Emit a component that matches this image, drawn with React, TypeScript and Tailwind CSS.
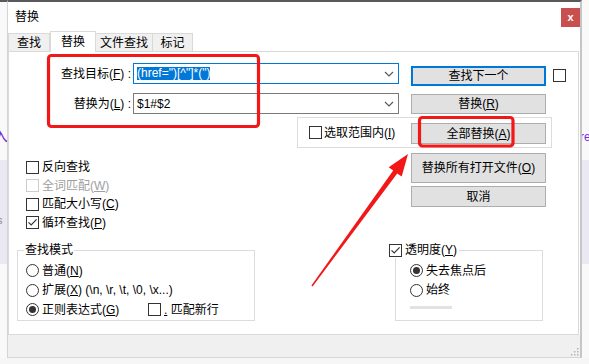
import React from "react";

const U = ({ children }: { children: React.ReactNode }) => (
  <span className="underline decoration-[1px] underline-offset-[1px]">{children}</span>
);

const Check = ({ checked = false, disabled = false }: { checked?: boolean; disabled?: boolean }) => (
  <span
    className={
      disabled
        ? "flex h-[13px] w-[13px] shrink-0 items-center justify-center border border-[#cccccc] bg-white"
        : "flex h-[13px] w-[13px] shrink-0 items-center justify-center border border-[#333333] bg-white"
    }
  >
    {checked && (
      <svg width="11" height="11" viewBox="0 0 11 11">
        <path d="M1.5 5.3 L4.2 8 L9.6 2.4" fill="none" stroke="#333333" strokeWidth="1.2" />
      </svg>
    )}
  </span>
);

const Radio = ({ checked = false }: { checked?: boolean }) => (
  <span className="flex h-[13px] w-[13px] shrink-0 items-center justify-center rounded-full border border-[#333333] bg-white">
    {checked && <span className="h-[7px] w-[7px] rounded-full bg-[#333333]" />}
  </span>
);

const Chevron = () => (
  <svg width="10" height="6" viewBox="0 0 10 6">
    <path d="M1 1 L5 5 L9 1" fill="none" stroke="#555555" strokeWidth="1.1" />
  </svg>
);

export default function App() {
  return (
    <div className="relative flex h-[364px] w-[589px] overflow-hidden bg-[#f6f6f6] font-[family-name:'Liberation_Sans','Noto_Sans_CJK_SC',sans-serif] text-[12px] leading-[16px] text-black">
      {/* left background strip */}
      <div className="flex h-[358px] w-[7px] shrink-0 flex-col overflow-hidden border-t-2 border-t-[#5a5a5a] bg-[#f9f9f9]">
        <div className="h-[124px] shrink-0" />
        <div className="-ml-[7px] h-[20px] shrink-0 text-[15px] leading-[20px] text-[#7a2bd6]">入</div>
        <div className="h-[14px] shrink-0" />
        <div className="flex h-[104px] shrink-0 flex-col bg-[#e9e8f3] pt-[54px]">
          <span className="-ml-[3px] text-[11px] leading-[12px] text-[#8a8a8a]">s</span>
        </div>
      </div>

      {/* dialog */}
      <div className="flex h-[358px] w-[575px] shrink-0 flex-col border-t-2 border-r-2 border-b border-l border-t-[#5a5a5a] border-r-[#c6c6c6] border-b-[#d6d6d6] border-l-[#d4d4d4] bg-white">
        {/* title bar */}
        <div className="flex h-[29px] shrink-0 justify-between">
          <span className="ml-[7px] self-center">替换</span>
          <div className="mt-[6px] flex h-[19px] w-[19px] items-center justify-center bg-[#c94f4f] text-[11px] font-bold leading-[11px] text-white">
            x
          </div>
        </div>

        {/* tabs */}
        <div className="flex h-[20px] shrink-0 items-end">
          <div className="flex h-[18px] w-[42px] items-center justify-center border border-b-0 border-[#d9d9d9] bg-[#f0f0f0]">查找</div>
          <div className="relative z-10 -mb-px flex h-[21px] w-[46px] items-center justify-center border border-b-0 border-[#d9d9d9] bg-white">替换</div>
          <div className="flex h-[18px] w-[57px] items-center justify-center border border-b-0 border-l-0 border-[#d9d9d9] bg-[#f0f0f0]">文件查找</div>
          <div className="flex h-[18px] w-[40px] items-center justify-center border border-b-0 border-l-0 border-[#d9d9d9] bg-[#f0f0f0]">标记</div>
        </div>

        {/* panel */}
        <div className="flex h-[284px] w-[571px] shrink-0 flex-col border border-[#d9d9d9] bg-white">
          {/* Row A */}
          <div className="mt-[11px] flex">
            <div className="flex flex-col gap-[9px]">
              <div className="flex h-[21px] items-center">
                <span className="w-[122px] text-right">
                  查找目标(<U>F</U>) :
                </span>
                <div className="ml-[2px] flex h-[21px] w-[266px] items-center justify-between border border-[#0078d7] bg-white pr-[4px] pl-[3px]">
                  <span className="bg-[#0078d7] leading-[13px] text-white">{'(href=")[^"]*(")'}</span>
                  <Chevron />
                </div>
              </div>
              <div className="flex h-[21px] items-center">
                <span className="w-[122px] text-right">
                  替换为(<U>L</U>) :
                </span>
                <div className="ml-[2px] flex h-[21px] w-[266px] items-center justify-between border border-[#7a7a7a] bg-white pr-[4px] pl-[3px]">
                  <span>$1#$2</span>
                  <Chevron />
                </div>
              </div>
            </div>
            <div className="mt-[3px] ml-[12px] flex flex-col gap-[8px]">
              <div className="flex h-[20px] w-[135px] items-center justify-center border-2 border-[#0078d7] bg-[#e1e1e1]">查找下一个</div>
              <div className="flex h-[20px] w-[135px] items-center justify-center border border-[#adadad] bg-[#e1e1e1]">
                替换(<U>R</U>)
              </div>
            </div>
            <div className="mt-[6px] ml-[7px]">
              <Check />
            </div>
          </div>

          {/* Row B */}
          <div className="mt-[3px] ml-[288px] flex h-[31px] w-[255px] items-center border border-[#dcdcdc]">
            <div className="flex w-[113px] items-center gap-[2px] pl-[11px]">
              <Check />
              <span>
                选取范围内(<U>I</U>)
              </span>
            </div>
            <div className="mt-[2px] flex h-[21px] w-[135px] items-center justify-center border border-[#adadad] bg-[#e1e1e1]">
              全部替换(<U>A</U>)
            </div>
          </div>

          {/* Row C */}
          <div className="flex">
            <div className="mt-[10px] flex w-[402px] flex-col pl-[17px]">
              <div className="flex h-[18.5px] items-center gap-[3px]">
                <Check />
                <span>反向查找</span>
              </div>
              <div className="flex h-[18.5px] items-center gap-[3px] text-[#a0a0a0]">
                <Check disabled />
                <span>
                  全词匹配(<U>W</U>)
                </span>
              </div>
              <div className="flex h-[18.5px] items-center gap-[3px]">
                <Check />
                <span>
                  匹配大小写(<U>C</U>)
                </span>
              </div>
              <div className="flex h-[18.5px] items-center gap-[3px]">
                <Check checked />
                <span>
                  循环查找(<U>P</U>)
                </span>
              </div>
            </div>
            <div className="mt-[5px] flex flex-col gap-[3px]">
              <div className="flex h-[30px] w-[135px] items-center justify-center border border-[#adadad] bg-[#e1e1e1]">
                替换所有打开文件(<U>O</U>)
              </div>
              <div className="flex h-[21px] w-[135px] items-center justify-center border border-[#adadad] bg-[#e1e1e1]">取消</div>
            </div>
          </div>

          {/* Row D */}
          <div className="mt-[10px] flex">
            <fieldset className="ml-[8px] h-[79px] w-[238px] border border-[#dcdcdc]">
              <legend className="ml-[6px] px-[1px]">查找模式</legend>
              <div className="flex flex-col pt-[3px] pl-[8px]">
                <div className="flex h-[19.5px] items-center gap-[3px]">
                  <Radio />
                  <span>
                    普通(<U>N</U>)
                  </span>
                </div>
                <div className="flex h-[19.5px] items-center gap-[3px]">
                  <Radio />
                  <span>
                    扩展(<U>X</U>) {"(\\n, \\r, \\t, \\0, \\x...)"}
                  </span>
                </div>
                <div className="flex h-[19.5px] items-center">
                  <div className="flex w-[122px] items-center gap-[3px]">
                    <Radio checked />
                    <span>
                      正则表达式(<U>G</U>)
                    </span>
                  </div>
                  <div className="flex items-center gap-[3px]">
                    <Check />
                    <span>
                      <U>.</U> 匹配新行
                    </span>
                  </div>
                </div>
              </div>
            </fieldset>
            <fieldset className="ml-[140px] h-[79px] w-[148px] border border-[#dcdcdc]">
              <legend className="-ml-[7px] flex items-center gap-[3px] bg-white pr-[2px]">
                <Check checked />
                <span>
                  透明度(<U>Y</U>)
                </span>
              </legend>
              <div className="flex flex-col pt-[3px] pl-[14px]">
                <div className="flex h-[19.5px] items-center gap-[3px]">
                  <Radio checked />
                  <span>失去焦点后</span>
                </div>
                <div className="flex h-[19.5px] items-center gap-[3px]">
                  <Radio />
                  <span>始终</span>
                </div>
                <div className="mt-[6px] h-[3px] w-[42px] bg-[#e2e2e2]" />
              </div>
            </fieldset>
          </div>
        </div>

        {/* bottom strip */}
        <div className="flex flex-1 items-end justify-end bg-[#f0f0f0] pr-[1px] pb-[1px]">
          <svg width="9" height="9" viewBox="0 0 9 9">
            <rect x="7" y="1" width="1.5" height="1.5" fill="#b5b5b5" />
            <rect x="4" y="4" width="1.5" height="1.5" fill="#b5b5b5" />
            <rect x="7" y="4" width="1.5" height="1.5" fill="#b5b5b5" />
            <rect x="1" y="7" width="1.5" height="1.5" fill="#b5b5b5" />
            <rect x="4" y="7" width="1.5" height="1.5" fill="#b5b5b5" />
            <rect x="7" y="7" width="1.5" height="1.5" fill="#b5b5b5" />
          </svg>
        </div>
      </div>

      {/* right background strip */}
      <div className="flex h-[358px] flex-1 flex-col overflow-hidden bg-[#f9f9f9]">
        <div className="h-[130px] shrink-0" />
        <div className="-ml-[2px] h-[14px] shrink-0 text-[12px] leading-[14px] text-[#7a2bd6]">re</div>
        <div className="h-[16px] shrink-0" />
        <div className="h-[104px] shrink-0 bg-[#e9e8f3]" />
      </div>

      {/* annotation overlay */}
      <svg className="pointer-events-none absolute top-0 left-0" width="589" height="364" viewBox="0 0 589 364">
        <rect x="48.5" y="55.5" width="210" height="71" rx="3" fill="none" stroke="#f21818" strokeWidth="3.2" />
        <rect x="419.5" y="117.5" width="93.5" height="28.5" rx="3" fill="none" stroke="#f21818" strokeWidth="3.2" />
        <polygon
          points="312.6,286.4 397.2,173.4 401.7,176.6 408,154 388.7,167.2 393.2,170.4 311.4,285.6"
          fill="#f21818"
        />
      </svg>
    </div>
  );
}
